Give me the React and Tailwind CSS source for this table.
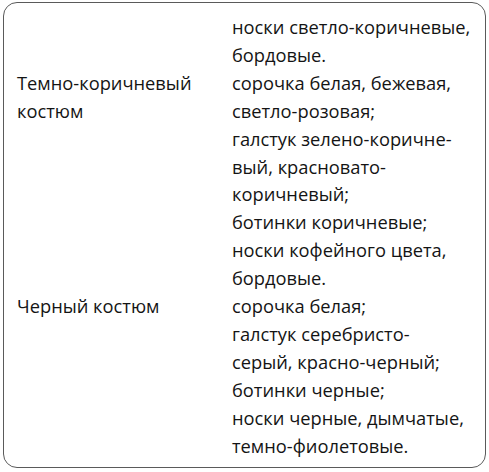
const rows = [
  {
    left: [],
    right: ["носки светло-коричневые,", "бордовые."],
  },
  {
    left: ["Темно-коричневый", "костюм"],
    right: [
      "сорочка белая, бежевая,",
      "светло-розовая;",
      "галстук зелено-коричне-",
      "вый, красновато-",
      "коричневый;",
      "ботинки коричневые;",
      "носки кофейного цвета,",
      "бордовые.",
    ],
  },
  {
    left: ["Черный костюм"],
    right: [
      "сорочка белая;",
      "галстук серебристо-",
      "серый, красно-черный;",
      "ботинки черные;",
      "носки черные, дымчатые,",
      "темно-фиолетовые.",
    ],
  },
];

export default function App() {
  return (
    <div className="w-[489px] h-[472px] bg-white pl-[3px] pt-[2px]">
      <div
        className="w-[483px] h-[466px] border border-[#5a5a5a] rounded-[14px] pt-[10px] pl-[13px] text-[18.3px] leading-[27.9px] text-[#141414]"
        style={{ fontFamily: '"Open Sans", "Noto Sans", sans-serif' }}
      >
        {rows.map((row, i) => (
          <div key={i} className="grid grid-cols-[215px_1fr]">
            <div>
              {row.left.map((line, j) => (
                <div key={j}>{line}</div>
              ))}
            </div>
            <div>
              {row.right.map((line, j) => (
                <div key={j} className="whitespace-nowrap">{line}</div>
              ))}
            </div>
          </div>
        ))}
      </div>
    </div>
  );
}
